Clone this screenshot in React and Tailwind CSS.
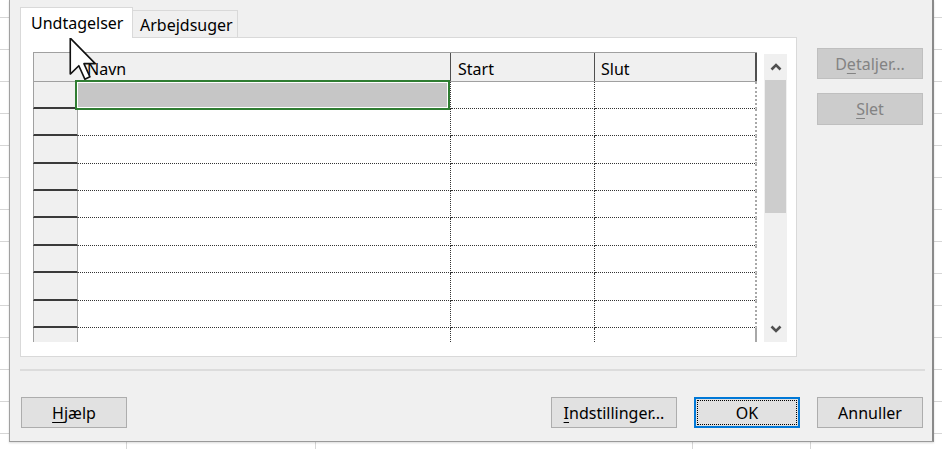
import React from "react";

const FONT = { fontFamily: '"Noto Sans", "Open Sans", Arial, sans-serif' };

function Chevron({ up }) {
  return (
    <svg width="12" height="8" viewBox="0 0 12 8">
      <polyline
        points={up ? "1.5,6.5 6,2 10.5,6.5" : "1.5,1.5 6,6 10.5,1.5"}
        fill="none"
        stroke="#505050"
        strokeWidth="2.6"
      />
    </svg>
  );
}

function Cursor() {
  return (
    <svg
      className="absolute left-[69px] top-[37px]"
      width="28"
      height="44"
      viewBox="0 0 12 19"
    >
      <polygon
        points="0.5,0.5 0.5,16 4.2,12.4 6.8,18.2 9,17.2 6.4,11.5 11.3,11.5"
        fill="#fff"
        stroke="#111"
        strokeWidth="0.7"
        strokeLinejoin="round"
      />
    </svg>
  );
}

function Btn({ children, className = "" }) {
  return (
    <div
      className={
        "h-[31px] w-[106px] flex items-center justify-center border border-[#adadad] bg-[#e1e1e1] text-[16px] text-black " +
        className
      }
    >
      {children}
    </div>
  );
}

export default function App() {
  const rows = [27, 27, 28, 27, 27, 28, 27, 28, 27, 14];
  const leftLines = [17, 49, 81, 113, 145, 177, 209, 241, 273, 305, 337, 369, 401, 433];
  return (
    <div
      className="relative w-[942px] h-[449px] bg-white overflow-hidden flex items-start pl-[9px]"
      style={FONT}
    >
      {/* excel background lines */}
      {leftLines.map((y) => (
        <div key={"l" + y} className="absolute left-0 w-[9px] h-px bg-[#d6d6d6]" style={{ top: y }} />
      ))}
      {leftLines.map((y) => (
        <div key={"r" + y} className="absolute right-0 w-[8px] h-px bg-[#d6d6d6]" style={{ top: y }} />
      ))}
      <div className="absolute left-[126px] bottom-0 w-px h-[7px] bg-[#d6d6d6]" />
      <div className="absolute left-[315px] bottom-0 w-px h-[7px] bg-[#d6d6d6]" />
      <div className="absolute left-[692px] bottom-0 w-px h-[7px] bg-[#d6d6d6]" />
      <div className="absolute left-[810px] bottom-0 w-px h-[7px] bg-[#d6d6d6]" />

      {/* dialog */}
      <div className="relative w-[925px] h-[442px] bg-[#f0f0f0] border-l border-r-2 border-b border-l-[#a0a0a0] border-r-[#8a8a8a] border-b-[#9a9a9a] flex flex-col shadow-[0_1px_2px_rgba(0,0,0,0.15)]">
        {/* top area */}
        <div className="flex pt-[7px] pl-[10px]">
          {/* tab control */}
          <div className="w-[777px] flex flex-col">
            <div className="flex items-end h-[30px]">
              <div className="relative z-10 -mb-px h-[31px] w-[113px] bg-white border border-b-0 border-[#d9d9d9] flex items-center pl-[10px] text-[16px] text-black">
                Undtagelser
              </div>
              <div className="h-[27px] w-[105px] bg-[#f0f0f0] border border-l-0 border-b-0 border-[#d9d9d9] flex items-center pl-[7px] pt-[2px] text-[16px] text-black">
                Arbejdsuger
              </div>
            </div>
            <div className="h-[320px] bg-white border border-[#d9d9d9] pt-[14px] pl-[12px] flex">
              {/* grid */}
              <div className="w-[724px] h-[290px] flex flex-col overflow-hidden text-[16px] text-black">
                <div className="h-[30px] flex bg-[#f0f0f0] border-t border-b border-[#a0a0a0]">
                  <div className="w-[45px] border-l border-[#a0a0a0]" />
                  <div className="w-[373px] border-r border-[#505050] flex items-center pl-[9px] pt-[3px]">
                    Navn
                  </div>
                  <div className="w-[144px] border-r border-[#505050] flex items-center pl-[7px] pt-[3px]">
                    Start
                  </div>
                  <div className="w-[162px] border-r-2 border-[#505050] flex items-center pl-[6px] pt-[3px]">
                    Slut
                  </div>
                </div>
                {rows.map((h, i) => (
                  <div key={i} className="flex" style={{ height: h }}>
                    <div
                      className={
                        "w-[45px] bg-[#f0f0f0] border-l border-r border-l-[#a0a0a0] border-r-[#a8a8a8] " +
                        (i < 9 ? "border-b-2 border-b-[#3a3a3a]" : "")
                      }
                    />
                    <div
                      className={
                        "relative w-[373px] border-r border-dotted border-r-[#333] " +
                        (i < 9 ? "border-b border-b-[#333]" : "")
                      }
                    >
                      {i === 0 && (
                        <div className="absolute -left-[3px] -top-[2px] right-0 -bottom-[2px] border-2 border-[#2f7d32] p-px bg-white">
                          <div className="w-full h-full bg-[#c6c6c6]" />
                        </div>
                      )}
                    </div>
                    <div
                      className={
                        "w-[144px] border-r border-dotted border-r-[#333] " +
                        (i < 9 ? "border-b border-b-[#333]" : "")
                      }
                    />
                    <div
                      className={
                        "w-[162px] border-r-2 border-r-[#a8a8a8] " +
                        (i < 9 ? "border-b border-dotted border-b-[#333]" : "")
                      }
                    />
                  </div>
                ))}
              </div>
              {/* scrollbar */}
              <div className="ml-[7px] mt-[2px] w-[23px] h-[288px] bg-[#f0f0f0] flex flex-col items-center">
                <div className="h-[26px] flex items-center justify-center">
                  <Chevron up />
                </div>
                <div className="w-[21px] h-[133px] bg-[#cdcdcd]" />
                <div className="flex-1" />
                <div className="h-[26px] flex items-center justify-center">
                  <Chevron />
                </div>
              </div>
            </div>
          </div>
          {/* right buttons */}
          <div className="ml-[20px] mt-[41px] flex flex-col gap-[14px]">
            <div className="h-[31px] w-[106px] flex items-center justify-center border border-[#bfbfbf] bg-[#cccccc] text-[16px] text-[#838383]">
              D<span className="underline underline-offset-[3px]">e</span>taljer...
            </div>
            <div className="h-[32px] w-[106px] flex items-center justify-center border border-[#bfbfbf] bg-[#cccccc] text-[16px] text-[#838383]">
              <span className="underline underline-offset-[3px]">S</span>let
            </div>
          </div>
        </div>

        {/* separator */}
        <div className="ml-[10px] mt-[12px] w-[905px] h-[2px] bg-[#dcdcdc]" />

        {/* bottom buttons */}
        <div className="flex items-center mt-[26px] pl-[11px]">
          <Btn>
            <span className="underline underline-offset-[3px]">H</span>jælp
          </Btn>
          <div className="flex-1" />
          <Btn className="w-[126px]">
            <span className="underline underline-offset-[3px]">I</span>ndstillinger...
          </Btn>
          <div className="ml-[17px] h-[31px] w-[106px] border-2 border-[#0078d7] bg-[#e1e1e1] p-[1px]">
            <div className="w-full h-full border border-dotted border-black flex items-center justify-center text-[16px] text-black">
              OK
            </div>
          </div>
          <Btn className="ml-[17px] mr-[9px]">Annuller</Btn>
        </div>
      </div>

      <Cursor />
    </div>
  );
}
